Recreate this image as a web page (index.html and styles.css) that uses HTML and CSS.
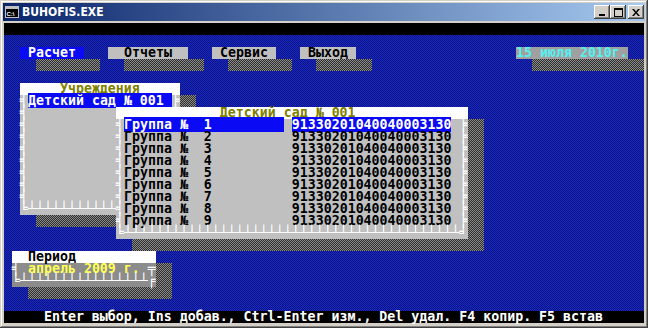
FILE: index.html
```html
<!DOCTYPE html>
<html lang="ru">
<head>
    <meta charset="UTF-8">
    <title>BUHOFIS.EXE</title>
    <link rel="stylesheet" href="styles.css">
</head>
<body>
    <div class="window">
        <div class="titlebar">
            <svg class="app-icon" width="14" height="12" viewBox="0 0 14 12">
                <rect x="0.5" y="0.5" width="13" height="11" fill="#000" stroke="#c0c0c0"/>
                <rect x="1" y="1" width="12" height="2" fill="#c0c0c0"/>
                <text x="1.5" y="9.5" font-family="Liberation Sans" font-size="6" font-weight="bold" fill="#fff">C:\</text>
            </svg>
            <span class="title">BUHOFIS.EXE</span>
            <div class="controls">
                <div class="ctl">
                    <svg width="8" height="8" viewBox="0 0 8 8"><rect x="1" y="6" width="6" height="2" fill="#000"/></svg>
                </div>
                <div class="ctl">
                    <svg width="9" height="9" viewBox="0 0 9 9"><path d="M0 0h9v9h-9z M1 2v6h7v-6z" fill="#000" fill-rule="evenodd"/></svg>
                </div>
                <div class="ctl ctl-close">
                    <svg width="8" height="7" viewBox="0 0 8 7"><path d="M0 0h2l2 2.5 2-2.5h2l-3 3.5 3 3.5h-2l-2-2.5-2 2.5h-2l3-3.5z" fill="#000"/></svg>
                </div>
            </div>
        </div>

        <!-- text screen 80x25 -->
        <div class="screen">
            <div class="topline"></div>

            <!-- menu line -->
            <div class="shade sh-calc"></div>
            <div class="shade sh-rep"></div>
            <div class="shade sh-serv"></div>
            <div class="shade sh-exit"></div>
            <div class="shade sh-date"></div>
            <div class="cell menu-on m-calc"> Расчет </div>
            <div class="cell menu m-rep">  Отчеты  </div>
            <div class="cell menu m-serv"> Сервис </div>
            <div class="cell menu m-exit"> Выход </div>
            <div class="cell date">15 июля 2010г.</div>

            <!-- Учреждения -->
            <div class="shade sh-orgs"></div>
            <div class="win orgs">
                <div class="ln head">     Учреждения</div>
                <div class="ln">╡<span class="sel">Детский сад № 001 </span>╞</div>
                <div class="ln">╡                  ╞</div>
                <div class="ln">╡                  ╞</div>
                <div class="ln">╡                  ╞</div>
                <div class="ln">╡                  ╞</div>
                <div class="ln">╡                  ╞</div>
                <div class="ln">╡                  ╞</div>
                <div class="ln">╡                  ╞</div>
                <div class="ln">╡                  ╞</div>
                <div class="ln">╘┴┴┴┴┴┴┴┴┴┴┴┴┴┴┴┴┴┴╛</div>
            </div>

            <!-- группы -->
            <div class="shade sh-groups"></div>
            <div class="win groups">
                <div class="ln head">             Детский сад № 001</div>
                <div class="ln">╡<span class="sel">Группа №  1         </span> <span class="sel">91330201040040003130</span> ╞</div>
                <div class="ln">╡<span class="txt">Группа №  2         </span> <span class="txt">91330201040040003130</span> ╞</div>
                <div class="ln">╡<span class="txt">Группа №  3         </span> <span class="txt">91330201040040003130</span> ╞</div>
                <div class="ln">╡<span class="txt">Группа №  4         </span> <span class="txt">91330201040040003130</span> ╞</div>
                <div class="ln">╡<span class="txt">Группа №  5         </span> <span class="txt">91330201040040003130</span> ╞</div>
                <div class="ln">╡<span class="txt">Группа №  6         </span> <span class="txt">91330201040040003130</span> ╞</div>
                <div class="ln">╡<span class="txt">Группа №  7         </span> <span class="txt">91330201040040003130</span> ╞</div>
                <div class="ln">╡<span class="txt">Группа №  8         </span> <span class="txt">91330201040040003130</span> ╞</div>
                <div class="ln">╡<span class="txt">Группа №  9         </span> <span class="txt">91330201040040003130</span> ╞</div>
                <div class="ln">╘┴┴┴┴┴┴┴┴┴┴┴┴┴┴┴┴┴┴┴┴┴┴┴┴┴┴┴┴┴┴┴┴┴┴┴┴┴┴┴┴┴┴╛</div>
            </div>

            <!-- Период -->
            <div class="shade sh-period"></div>
            <div class="win period">
                <div class="ln head head-dark">  Период</div>
                <div class="ln">╡ <span class="yel">апрель 2009 г.</span> ╤</div>
                <div class="ln">╘┴┴┴┴┴┴┴┴┴┴┴┴┴┴┴┴╒</div>
            </div>

            <div class="cell status">     Enter выбор, Ins добав., Ctrl-Enter изм., Del удал. F4 копир. F5 встав</div>
        </div>
    </div>
</body>
</html>
```

FILE: styles.css
```css
* {
    margin: 0;
    padding: 0;
    box-sizing: border-box;
}

body {
    width: 648px;
    height: 328px;
    overflow: hidden;
    background-color: #d4d0c8;
}

/* Classic window frame */
.window {
    width: 648px;
    height: 328px;
    padding: 3px 3px 5px;
    background-color: #d4d0c8;
    box-shadow: inset -1px -1px #404040, inset 1px 1px #d4d0c8, inset -2px -2px #808080, inset 2px 2px #fff;
    display: flex;
    flex-direction: column;
    gap: 2px;
}

.titlebar {
    height: 18px;
    display: flex;
    align-items: center;
    padding: 0 1px 0 2px;
    background: linear-gradient(to right, #0a246a, #a6caf0);
}

.app-icon {
    margin-right: 3px;
}

.title {
    flex: 1;
    color: #fff;
    font: bold 12px "Liberation Sans Narrow", "DejaVu Sans Condensed", "Liberation Sans", sans-serif;
}

.controls {
    display: flex;
}

.ctl {
    width: 16px;
    height: 14px;
    display: flex;
    align-items: center;
    justify-content: center;
    background-color: #d4d0c8;
    box-shadow: inset -1px -1px #404040, inset 1px 1px #fff, inset -2px -2px #808080;
}

.ctl-close {
    margin-left: 2px;
}

/* Text mode screen: 80 columns x 25 rows, 8x12 cells */
.screen {
    margin: 0 1px;
    height: 300px;
    display: grid;
    grid-template-columns: repeat(80, 8px);
    grid-template-rows: repeat(25, 12px);
    font: bold 13.28px/12px "DejaVu Sans Mono", "Liberation Mono", monospace;
    background: repeating-conic-gradient(#0a1294 0 25%, #1c2ab2 0 50%) 0 0 / 2px 2px;
    color: #000;
}

.cell,
.ln {
    white-space: pre;
}

.topline {
    grid-row: 1;
    grid-column: 1 / -1;
    background-color: #000;
}

.status {
    grid-row: 25;
    grid-column: 1 / -1;
    background-color: #000;
    color: #fff;
}

.shade {
    background: repeating-conic-gradient(#8a8a8a 0 25%, #2e2e2e 0 50%) 0 0 / 2px 2px;
}

/* Menu */
.menu {
    background-color: #c0c0c0;
    color: #000;
}

.menu-on {
    background-color: #0a0af5;
    color: #fff;
}

.m-calc { grid-row: 3; grid-column: 3 / span 8; }
.m-rep  { grid-row: 3; grid-column: 14 / span 10; }
.m-serv { grid-row: 3; grid-column: 27 / span 8; }
.m-exit { grid-row: 3; grid-column: 38 / span 7; }

.date {
    grid-row: 3;
    grid-column: 65 / span 14;
    background-color: #a0a0a0;
    color: #55f0f0;
}

.sh-calc { grid-row: 4; grid-column: 5 / span 8; }
.sh-rep  { grid-row: 4; grid-column: 16 / span 10; }
.sh-serv { grid-row: 4; grid-column: 29 / span 8; }
.sh-exit { grid-row: 4; grid-column: 40 / span 7; }
.sh-date { grid-row: 4; grid-column: 67 / span 14; }

/* Windows */
.win {
    display: grid;
    grid-auto-rows: 12px;
    background-color: #c0c0c0;
    color: #fff;
}

.head {
    background-color: #fff;
    color: #808000;
}

.head-dark {
    color: #000;
}

.sel {
    background-color: #0a0af5;
    color: #fff;
}

.txt {
    color: #000;
}

.yel {
    color: #ffff55;
}

.orgs      { grid-row: 6 / span 11; grid-column: 3 / span 20; }
.sh-orgs   { grid-row: 7 / span 11; grid-column: 5 / span 20; }

.groups    { grid-row: 8 / span 11; grid-column: 15 / span 44; }
.sh-groups { grid-row: 9 / span 11; grid-column: 17 / span 44; }

.period    { grid-row: 20 / span 3; grid-column: 2 / span 18; background-color: #8c8c8c; }
.sh-period { grid-row: 21 / span 3; grid-column: 4 / span 18; }
```
